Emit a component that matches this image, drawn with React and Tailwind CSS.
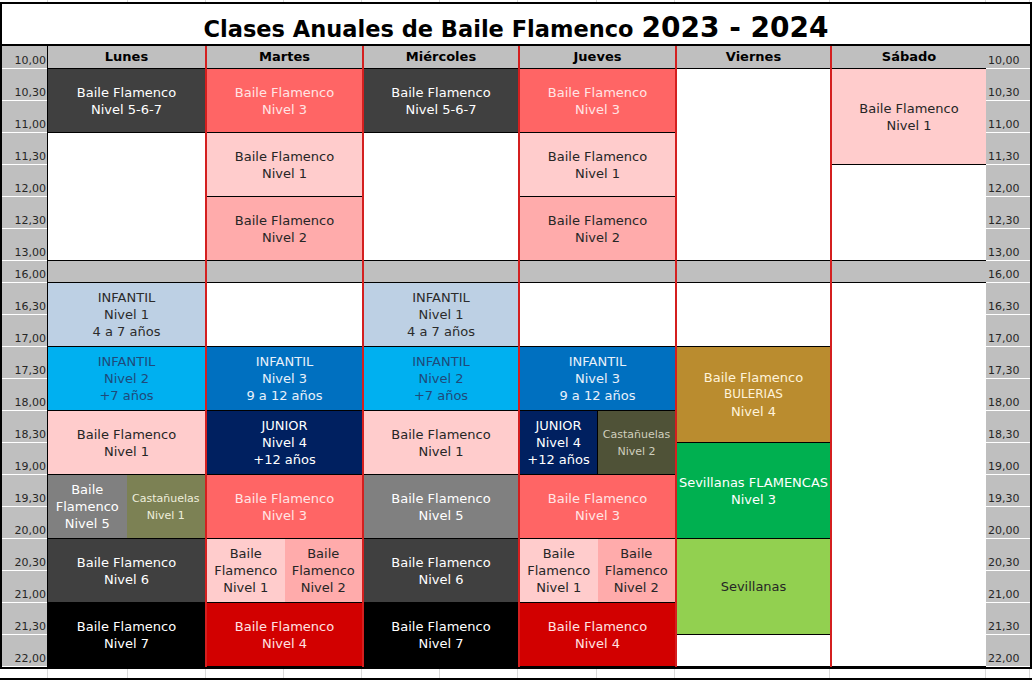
import React from "react";

const RED_LINE = "border-l-2 border-[#d41f1f]";

// colour presets for the class blocks
const DARK = "bg-[#404040] text-white";
const BLACK = "bg-black text-white";
const SALMON = "bg-[#ff6565] text-[#ffe4e4]";
const LPINK = "bg-[#ffcccc] text-[#262626]";
const PINK = "bg-[#ffabab] text-[#262626]";
const RED = "bg-[#d20000] text-[#ffe2e2]";
const LBLUE = "bg-[#bdd0e4] text-[#2b2b2b]";
const CYAN = "bg-[#00b0f0] text-[#1f4a7a]";
const BLUE = "bg-[#0070c0] text-[#e8f1fa]";
const NAVY = "bg-[#002060] text-white";
const GREYB = "bg-[#808080] text-white";
const OLIVE = "bg-[#7c8154] text-[#eeeedc]";
const DOLIVE = "bg-[#4f5237] text-[#cfcfbe]";
const GOLD = "bg-[#ba8c2f] text-[#fff3da]";
const GREEN = "bg-[#00b050] text-white";
const LGREEN = "bg-[#92d050] text-[#262626]";
const WHITE = "bg-white";

const GAP = { h: "h-[22px]", c: "bg-[#bfbfbf]" };

const lunes = [
  { h: "h-[64px]", c: DARK, t: ["Baile Flamenco", "Nivel 5-6-7"] },
  { h: "h-[128px]", c: WHITE },
  GAP,
  { h: "h-[64px]", c: LBLUE, t: ["INFANTIL", "Nivel 1", "4 a 7 años"] },
  { h: "h-[64px]", c: CYAN, t: ["INFANTIL", "Nivel 2", "+7 años"] },
  { h: "h-[64px]", c: LPINK, t: ["Baile Flamenco", "Nivel 1"] },
  {
    h: "h-[64px]",
    split: [
      { c: GREYB, t: ["Baile", "Flamenco", "Nivel 5"] },
      { c: OLIVE, t: ["Castañuelas", "Nivel 1"], small: true },
    ],
  },
  { h: "h-[64px]", c: DARK, t: ["Baile Flamenco", "Nivel 6"] },
  { h: "h-[64px]", c: BLACK, t: ["Baile Flamenco", "Nivel 7"] },
];

const martes = [
  { h: "h-[64px]", c: SALMON, t: ["Baile Flamenco", "Nivel 3"] },
  { h: "h-[64px]", c: LPINK, t: ["Baile Flamenco", "Nivel 1"] },
  { h: "h-[64px]", c: PINK, t: ["Baile Flamenco", "Nivel 2"] },
  GAP,
  { h: "h-[64px]", c: WHITE },
  { h: "h-[64px]", c: BLUE, t: ["INFANTIL", "Nivel 3", "9 a 12 años"] },
  { h: "h-[64px]", c: NAVY, t: ["JUNIOR", "Nivel 4", "+12 años"] },
  { h: "h-[64px]", c: SALMON, t: ["Baile Flamenco", "Nivel 3"] },
  {
    h: "h-[64px]",
    split: [
      { c: LPINK, t: ["Baile", "Flamenco", "Nivel 1"] },
      { c: PINK, t: ["Baile", "Flamenco", "Nivel 2"] },
    ],
  },
  { h: "h-[64px]", c: RED, t: ["Baile Flamenco", "Nivel 4"] },
];

const miercoles = [
  { h: "h-[64px]", c: DARK, t: ["Baile Flamenco", "Nivel 5-6-7"] },
  { h: "h-[128px]", c: WHITE },
  GAP,
  { h: "h-[64px]", c: LBLUE, t: ["INFANTIL", "Nivel 1", "4 a 7 años"] },
  { h: "h-[64px]", c: CYAN, t: ["INFANTIL", "Nivel 2", "+7 años"] },
  { h: "h-[64px]", c: LPINK, t: ["Baile Flamenco", "Nivel 1"] },
  { h: "h-[64px]", c: GREYB, t: ["Baile Flamenco", "Nivel 5"] },
  { h: "h-[64px]", c: DARK, t: ["Baile Flamenco", "Nivel 6"] },
  { h: "h-[64px]", c: BLACK, t: ["Baile Flamenco", "Nivel 7"] },
];

const jueves = [
  { h: "h-[64px]", c: SALMON, t: ["Baile Flamenco", "Nivel 3"] },
  { h: "h-[64px]", c: LPINK, t: ["Baile Flamenco", "Nivel 1"] },
  { h: "h-[64px]", c: PINK, t: ["Baile Flamenco", "Nivel 2"] },
  GAP,
  { h: "h-[64px]", c: WHITE },
  { h: "h-[64px]", c: BLUE, t: ["INFANTIL", "Nivel 3", "9 a 12 años"] },
  {
    h: "h-[64px]",
    split: [
      { c: NAVY + " border-r border-black", t: ["JUNIOR", "Nivel 4", "+12 años"] },
      { c: DOLIVE, t: ["Castañuelas", "Nivel 2"], small: true },
    ],
  },
  { h: "h-[64px]", c: SALMON, t: ["Baile Flamenco", "Nivel 3"] },
  {
    h: "h-[64px]",
    split: [
      { c: LPINK, t: ["Baile", "Flamenco", "Nivel 1"] },
      { c: PINK, t: ["Baile", "Flamenco", "Nivel 2"] },
    ],
  },
  { h: "h-[64px]", c: RED, t: ["Baile Flamenco", "Nivel 4"] },
];

const viernes = [
  { h: "h-[192px]", c: WHITE },
  GAP,
  { h: "h-[64px]", c: WHITE },
  { h: "h-[96px]", c: GOLD, t: ["Baile Flamenco", "BULERIAS", "Nivel 4"] },
  { h: "h-[96px]", c: GREEN, t: ["Sevillanas FLAMENCAS", "Nivel 3"] },
  { h: "h-[96px]", c: LGREEN, t: ["Sevillanas"] },
  { h: "h-[32px]", c: WHITE },
];

const sabado = [
  { h: "h-[96px]", c: LPINK, t: ["Baile Flamenco", "Nivel 1"] },
  { h: "h-[96px]", c: WHITE },
  GAP,
  { h: "h-[384px]", c: WHITE },
];

const days = [
  { name: "Lunes", w: "w-[157px]", blocks: lunes, first: true },
  { name: "Martes", w: "w-[157px]", blocks: martes },
  { name: "Miércoles", w: "w-[156px]", blocks: miercoles },
  { name: "Jueves", w: "w-[157px]", blocks: jueves },
  { name: "Viernes", w: "w-[155px]", blocks: viernes },
  { name: "Sábado", w: "w-[156px]", blocks: sabado },
];

const morning = ["10,30", "11,00", "11,30", "12,00", "12,30", "13,00"];
const afternoon = [
  "16,30", "17,00", "17,30", "18,00", "18,30", "19,00",
  "19,30", "20,00", "20,30", "21,00", "21,30", "22,00",
];

// excel gridline widths for the blank strips above/below the sheet
const grid = [
  "w-[48px]", "w-[80px]", "w-[78px]", "w-[78px]", "w-[78px]", "w-[78px]",
  "w-[78px]", "w-[79px]", "w-[78px]", "w-[155px]", "w-[156px]", "w-[44px]",
];

function GridStrip({ h }) {
  return (
    <div className={`flex ${h}`}>
      {grid.map((w, i) => (
        <div key={i} className={`${w} shrink-0 border-r border-[#dadada]`} />
      ))}
    </div>
  );
}

function Cell({ c, t, small, extra = "" }) {
  return (
    <div
      className={`${c} ${extra} flex flex-col items-center justify-center text-center leading-[17px] whitespace-nowrap ${
        small ? "text-[11px]" : "text-[13px]"
      }`}
    >
      {t && t.map((l) => (
        <div key={l} className={l === "BULERIAS" ? "text-[12px]" : ""}>
          {l}
        </div>
      ))}
    </div>
  );
}

function Block({ h, c, t, split }) {
  if (split) {
    return (
      <div className={`${h} flex border-b border-black`}>
        {split.map((s, i) => (
          <Cell key={i} {...s} extra="flex-1 min-w-0" />
        ))}
      </div>
    );
  }
  return <Cell c={c} t={t} extra={`${h} border-b border-black`} />;
}

function DayCol({ name, w, blocks, first }) {
  return (
    <div className={`${w} shrink-0 flex flex-col ${first ? "" : RED_LINE}`}>
      <div className="h-[23px] bg-[#bfbfbf] border-b border-black flex items-center justify-center font-bold text-[13px] text-black">
        {name}
      </div>
      {blocks.map((b, i) => (
        <Block key={i} {...b} />
      ))}
    </div>
  );
}

function TimeCell({ label, h, right }) {
  return (
    <div
      className={`${h} bg-[#bfbfbf] border-b border-white flex items-end pb-[1px] leading-[13px] text-[11px] text-[#262626] ${
        right ? "justify-end pr-[1px]" : "justify-start pl-[2px]"
      }`}
    >
      {label}
    </div>
  );
}

function TimeCol({ right }) {
  return (
    <div className={`shrink-0 flex flex-col ${right ? "w-[46px] border-r border-black" : "w-[44px]"}`}>
      <TimeCell label="10,00" h="h-[23px]" right={right} />
      {morning.map((l) => (
        <TimeCell key={l} label={l} h="h-[32px]" right={right} />
      ))}
      <TimeCell label="16,00" h="h-[22px]" right={right} />
      {afternoon.map((l) => (
        <TimeCell key={l} label={l} h="h-[32px]" right={right} />
      ))}
    </div>
  );
}

export default function App() {
  return (
    <div className="w-[1034px] h-[681px] bg-white overflow-hidden font-['DejaVu_Sans',sans-serif]">
      <GridStrip h="h-[2px]" />
      <div className="w-[1032px] border-2 border-black">
        <div className="h-[42px] border-b-2 border-black flex items-baseline justify-center pt-[10px] text-black font-bold">
          <span className="text-[22.5px] leading-none">Clases Anuales de Baile Flamenco</span>
          <span className="text-[28px] leading-none ml-[8px]">2023 - 2024</span>
        </div>
        <div className="flex">
          <TimeCol right />
          {days.map((d) => (
            <DayCol key={d.name} {...d} />
          ))}
          <TimeCol />
        </div>
      </div>
      <GridStrip h="h-[9px]" />
      <div className="h-[2px] w-[1032px] bg-black" />
    </div>
  );
}
